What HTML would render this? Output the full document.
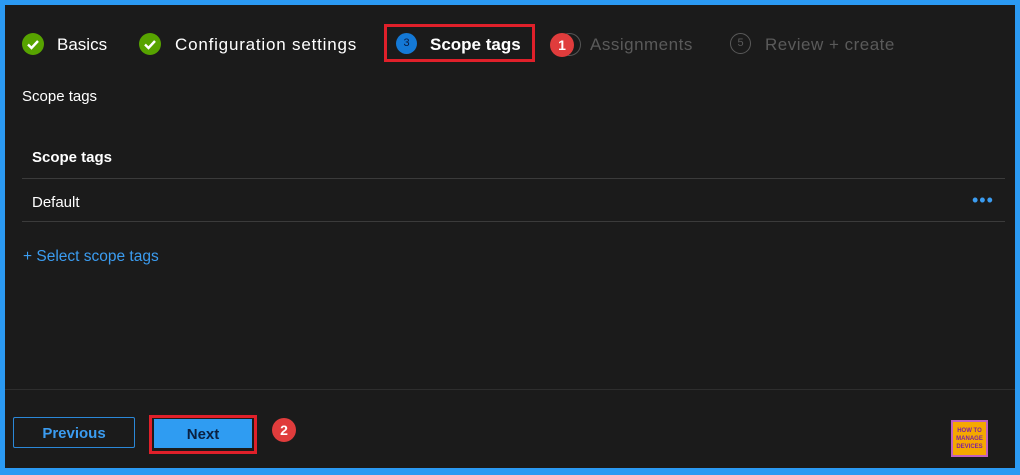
<!DOCTYPE html>
<html><head><style>
body{margin:0;width:1020px;height:475px;background:#2b9af3;font-family:"Liberation Sans",sans-serif;overflow:hidden;position:relative}
#p{position:absolute;left:5px;top:5px;width:1010px;height:463px;background:#1b1b1b}
.t{position:absolute;font-size:17px;color:#fff;white-space:nowrap}
.ck{position:absolute;width:22px;height:22px;border-radius:50%;background:#57a300}
.ln{position:absolute;left:17px;width:983px;height:1px;background:#3b3b3b}
.badge{position:absolute;width:24px;height:24px;border-radius:50%;background:#e03c3c;color:#fff;font-weight:bold;font-size:14px;text-align:center;line-height:24px}
</style></head><body><div id="p">
<div class="ck" style="left:17px;top:28px"><svg width="22" height="22"><path d="M6 11.5l3.5 3.5 6.5-7" stroke="#fff" stroke-width="2.4" fill="none"/></svg></div>
<div class="t" style="left:52px;top:30px">Basics</div>
<div class="ck" style="left:134px;top:28px"><svg width="22" height="22"><path d="M6 11.5l3.5 3.5 6.5-7" stroke="#fff" stroke-width="2.4" fill="none"/></svg></div>
<div class="t" style="left:170px;top:30px;letter-spacing:0.8px">Configuration settings</div>
<div style="position:absolute;left:379px;top:19px;width:151px;height:38px;border:3px solid #e0202a;box-sizing:border-box"></div>
<div style="position:absolute;left:391px;top:28px;width:21px;height:21px;border-radius:50%;background:#1479d6;color:#0a1a40;font-size:11px;text-align:center;line-height:21px">3</div>
<div class="t" style="left:425px;top:30px;font-weight:bold">Scope tags</div>
<div style="position:absolute;left:553px;top:28px;width:21px;height:21px;border-radius:50%;border:1px solid #555"></div>
<div class="badge" style="left:545px;top:28px">1</div>
<div class="t" style="left:585px;top:30px;color:#5a5a5a;letter-spacing:0.5px">Assignments</div>
<div style="position:absolute;left:725px;top:28px;width:19px;height:19px;border-radius:50%;border:1.5px solid #5a5a5a;color:#5a5a5a;font-size:11px;text-align:center;line-height:19px">5</div>
<div class="t" style="left:760px;top:30px;color:#5a5a5a;letter-spacing:0.5px">Review + create</div>
<div class="t" style="left:17px;top:83px;font-size:15px">Scope tags</div>
<div class="t" style="left:27px;top:144px;font-size:15px;font-weight:bold">Scope tags</div>
<div class="ln" style="top:173px"></div>
<div class="t" style="left:27px;top:189px;font-size:15px">Default</div>
<div class="t" style="left:967px;top:185px;color:#3b9cf0;font-size:18px;letter-spacing:1px">•••</div>
<div class="ln" style="top:216px"></div>
<div class="t" style="left:18px;top:243px;font-size:15.5px;color:#3b9cf0">+ Select scope tags</div>
<div style="position:absolute;left:0;top:384px;width:1010px;height:1px;background:#2e2e2e"></div>
<div style="position:absolute;left:8px;top:412px;width:122px;height:31px;border:1px solid #2b88d8;border-radius:2px;box-sizing:border-box;color:#3b9cf0;font-weight:bold;font-size:15px;text-align:center;line-height:31px">Previous</div>
<div style="position:absolute;left:144px;top:410px;width:108px;height:39px;border:3px solid #e0202a;box-sizing:border-box"></div>
<div style="position:absolute;left:149px;top:414px;width:98px;height:29px;background:#2f9cf2;color:#0b2040;font-weight:bold;font-size:15px;text-align:center;line-height:31px">Next</div>
<div class="badge" style="left:267px;top:413px">2</div>
<div style="position:absolute;left:946px;top:415px;width:37px;height:37px;background:#c060c0;padding:2px;box-sizing:border-box"><div style="background:#f5a800;width:33px;height:33px;font-size:6px;color:#8020a0;font-weight:bold;text-align:center;line-height:8px;padding-top:5px;box-sizing:border-box">HOW TO<br>MANAGE<br>DEVICES</div></div>
</div></body></html>
